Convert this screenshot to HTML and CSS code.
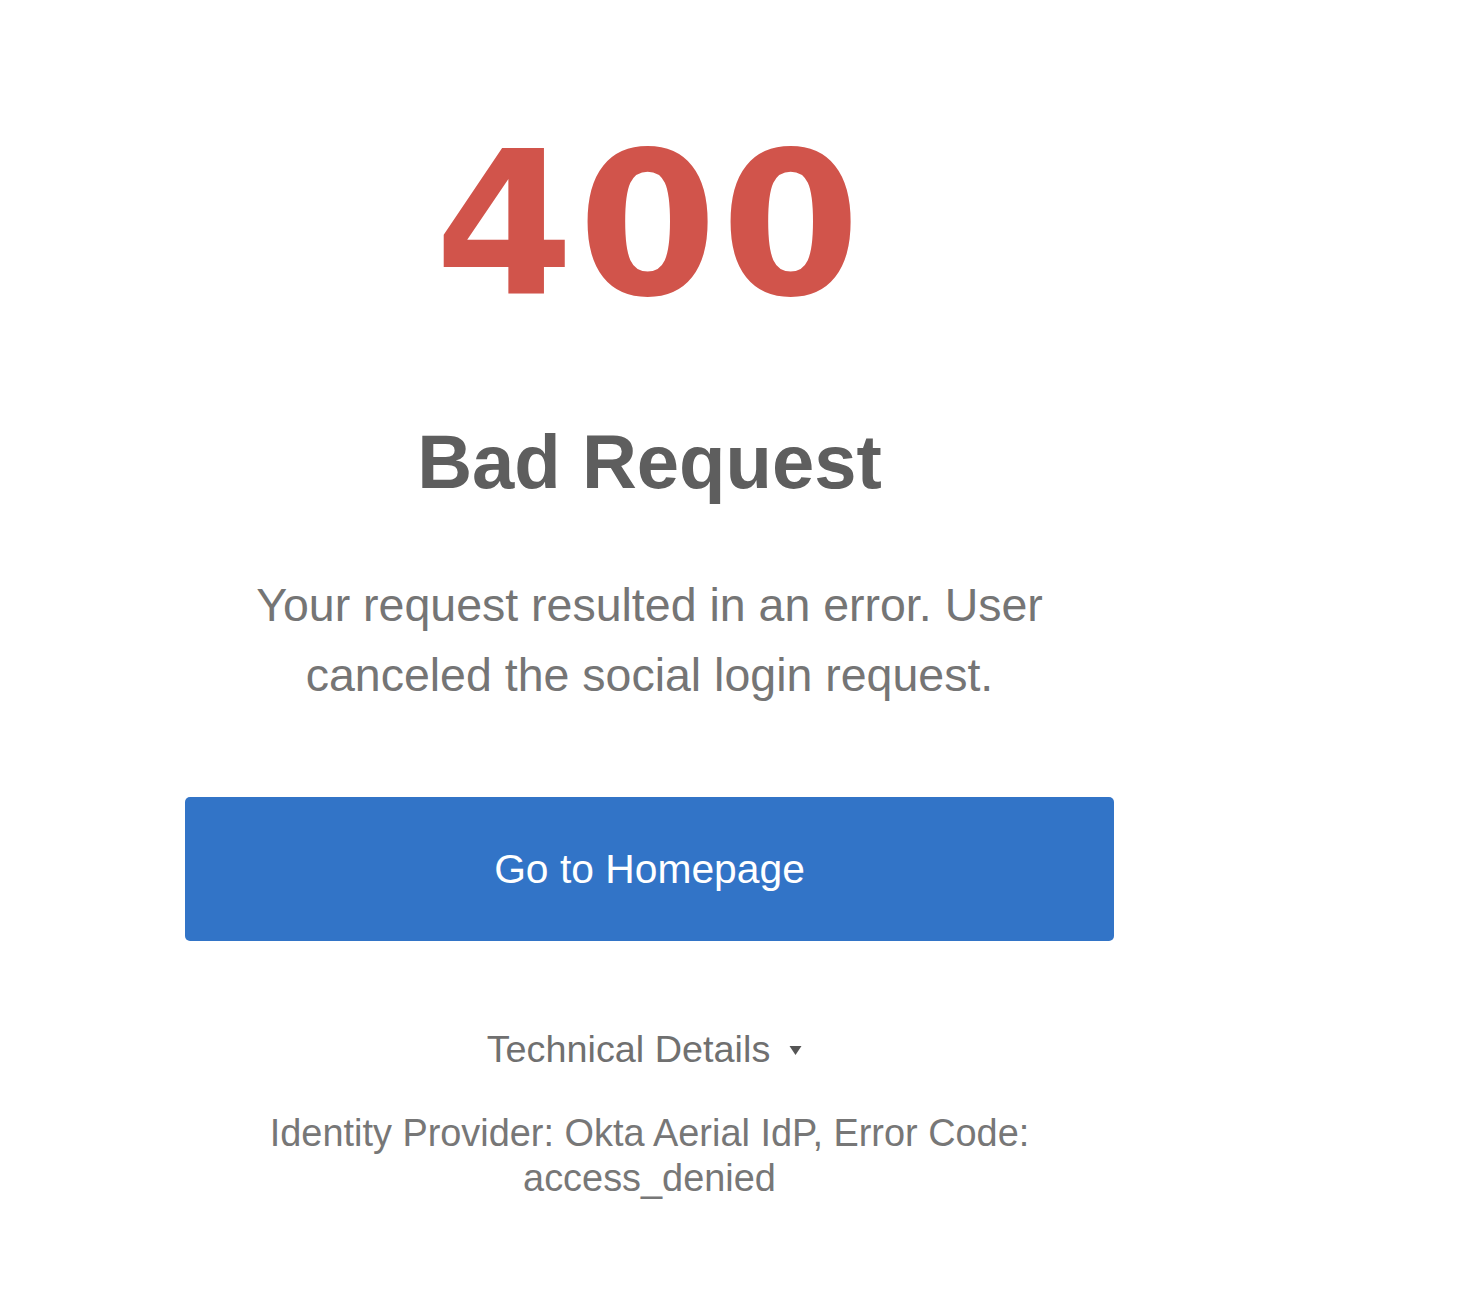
FILE: index.html
```html
<!DOCTYPE html>
<html lang="en">
<head>
<meta charset="utf-8">
<title>Bad Request</title>
<link rel="stylesheet" href="styles.css">
</head>
<body>
<main class="page">
  <div class="error-box">
    <div class="code">400</div>
    <h1 class="title">Bad Request</h1>
    <p class="message">Your request resulted in an error. User canceled the social login request.</p>
    <a class="home-btn" href="#">Go to Homepage</a>
    <div class="details-toggle">
      <span>Technical Details</span>
      <svg class="caret" width="13" height="11" viewBox="0 0 13 11"><path d="M0.5 1 L12.5 1 L6.5 10 Z" fill="#555"/></svg>
    </div>
    <p class="details">Identity Provider: Okta Aerial IdP, Error Code: access_denied</p>
  </div>
</main>
</body>
</html>
```
FILE: styles.css
```css
html, body {
  margin: 0;
  padding: 0;
  background: #ffffff;
}
body {
  font-family: "Liberation Sans", Arial, sans-serif;
}
.page {
  padding: 0 0 0 185px;
}
.error-box {
  width: 929px;
  display: flex;
  flex-direction: column;
  align-items: center;
  text-align: center;
}
.code {
  font-family: "DejaVu Sans", Verdana, sans-serif;
  font-weight: bold;
  font-size: 200px;
  line-height: 200px;
  color: #d1544b;
  margin-top: 125px;
  letter-spacing: 4px;
}
.title {
  margin: 91px 0 0 0;
  font-size: 76px;
  line-height: 91px;
  font-weight: bold;
  color: #5e5e5e;
}
.message {
  margin: 63px 0 0 0;
  font-size: 46.5px;
  line-height: 70px;
  color: #757575;
  width: 880px;
}
.home-btn {
  margin-top: 87px;
  align-self: stretch;
  height: 144px;
  background: #3274c7;
  border-radius: 5px;
  color: #ffffff;
  font-size: 40.8px;
  text-decoration: none;
  display: flex;
  align-items: center;
  justify-content: center;
}
.details-toggle {
  margin-top: 86px;
  margin-right: 10px;
  display: flex;
  align-items: center;
  gap: 19px;
  font-size: 37.8px;
  line-height: 44px;
  color: #707070;
}
.caret {
  margin-top: 2px;
}
.details {
  margin: 40px 0 0 0;
  font-size: 37.9px;
  line-height: 45px;
  color: #777777;
  width: 880px;
}
```
